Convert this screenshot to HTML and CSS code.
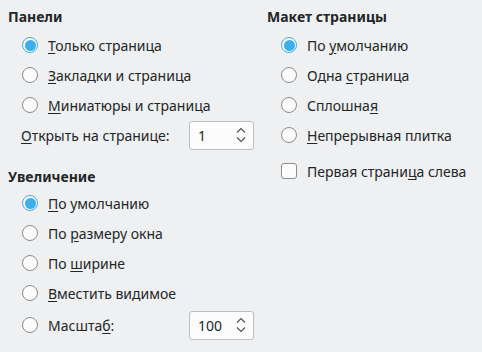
FILE: index.html
```html
<!DOCTYPE html>
<html lang="ru">
<head>
<meta charset="utf-8">
<link rel="stylesheet" href="styles.css">
</head>
<body>
<div class="page">
  <div class="col col-left">
    <div class="heading">Панели</div>
    <div class="opt"><span class="radio checked"></span><span class="txt"><u>Т</u>олько страница</span></div>
    <div class="opt"><span class="radio"></span><span class="txt"><u>З</u>акладки и страница</span></div>
    <div class="opt"><span class="radio"></span><span class="txt"><u>М</u>иниатюры и страница</span></div>
    <div class="spinrow"><span class="txt"><u>О</u>ткрыть на странице:</span>
      <div class="spin"><span class="val">1</span>
        <svg class="arrows" width="12" height="20" viewBox="0 0 12 20"><path d="M2 7.5 L6 3.5 L10 7.5 M2 12.5 L6 16.5 L10 12.5" fill="none" stroke="#4d4f51" stroke-width="1.1"/></svg>
      </div>
    </div>
    <div class="heading heading2">Увеличение</div>
    <div class="opt"><span class="radio checked"></span><span class="txt"><u>П</u>о умолчанию</span></div>
    <div class="opt"><span class="radio"></span><span class="txt">По <u>р</u>азмеру окна</span></div>
    <div class="opt"><span class="radio"></span><span class="txt">По <u>ш</u>ирине</span></div>
    <div class="opt"><span class="radio"></span><span class="txt"><u>В</u>местить видимое</span></div>
    <div class="opt opt-spin"><span class="radio"></span><span class="txt">Масшта<u>б</u>:</span>
      <div class="spin"><span class="val">100</span>
        <svg class="arrows" width="12" height="20" viewBox="0 0 12 20"><path d="M2 7.5 L6 3.5 L10 7.5 M2 12.5 L6 16.5 L10 12.5" fill="none" stroke="#4d4f51" stroke-width="1.1"/></svg>
      </div>
    </div>
  </div>
  <div class="col col-right">
    <div class="heading">Макет страницы</div>
    <div class="opt"><span class="radio checked"></span><span class="txt">По <u>у</u>молчанию</span></div>
    <div class="opt"><span class="radio"></span><span class="txt">Одна <u>с</u>траница</span></div>
    <div class="opt"><span class="radio"></span><span class="txt">Сплошна<u>я</u></span></div>
    <div class="opt"><span class="radio"></span><span class="txt"><u>Н</u>епрерывная плитка</span></div>
    <div class="opt opt-check"><span class="check"></span><span class="txt">Первая страни<u>ц</u>а слева</span></div>
  </div>
</div>
</body>
</html>
```

FILE: styles.css
```css
html, body {
  margin: 0;
  padding: 0;
  background: #eff0f1;
}
body {
  font-family: "Noto Sans", "DejaVu Sans", sans-serif;
  font-size: 14px;
  color: #232627;
  width: 482px;
  height: 352px;
  overflow: hidden;
}
u {
  text-decoration: underline;
  text-underline-offset: 2px;
  text-decoration-thickness: 1px;
}
.page {
  display: grid;
  grid-template-columns: 259px 1fr;
  padding: 7px 0 0 8px;
}
.col {
  display: flex;
  flex-direction: column;
}
.heading {
  font-weight: bold;
  height: 20px;
  line-height: 20px;
  margin-bottom: 3px;
}
.heading2 {
  margin-top: 17px;
  margin-bottom: 1px;
}
.opt {
  display: flex;
  align-items: center;
  height: 30px;
  padding-left: 14px;
}
.radio {
  width: 16px;
  height: 16px;
  box-sizing: border-box;
  border-radius: 50%;
  border: 1px solid #8a8c8e;
  background: #fcfcfc;
  margin-right: 10px;
  flex: none;
  position: relative;
}
.radio.checked {
  border-color: #3daee9;
  background: #fcfcfc;
}
.radio.checked::after {
  content: "";
  position: absolute;
  left: 1.5px;
  top: 1.5px;
  width: 11px;
  height: 11px;
  border-radius: 50%;
  background: #3daee9;
}
.check {
  width: 16px;
  height: 16px;
  box-sizing: border-box;
  border-radius: 3px;
  border: 1px solid #8a8c8e;
  background: #fcfcfc;
  margin-right: 10px;
  flex: none;
}
.opt-check {
  margin-top: 6px;
}
.spinrow {
  display: flex;
  align-items: center;
  height: 30px;
  padding-left: 13px;
}
.spinrow .txt {
  width: 168px;
}
.opt-spin {
  margin-top: 2px;
}
.opt-spin .txt {
  width: 141px;
}
.spin {
  width: 65px;
  height: 29px;
  box-sizing: border-box;
  border: 1px solid #bcbebf;
  border-radius: 3px;
  background: #fcfcfc;
  display: flex;
  align-items: center;
  justify-content: space-between;
  padding: 0 6px 0 8px;
}
.arrows {
  display: block;
}
```
